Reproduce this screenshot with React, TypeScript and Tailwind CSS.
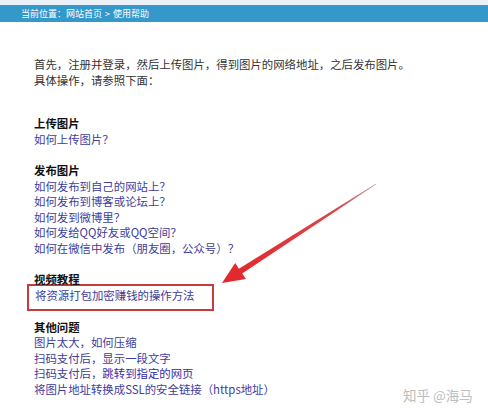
import React from "react";

const link = "text-[#3d3d9c]";

export default function App() {
  return (
    <div
      className="relative h-[413px] w-[488px] overflow-hidden bg-white text-[11.4px] leading-[15.5px] text-[#333]"
      style={{ fontFamily: '"Noto Sans CJK SC", "Noto Sans", sans-serif' }}
    >
      <div className="h-[5px] bg-[#eaf2f7]" />
      <div className="flex h-[17px] items-center bg-[#3598cb] pl-[21px] text-[9px] leading-[17px] text-white">
        <span>当前位置：网站首页</span>
        <span className="mx-[3px]">&gt;</span>
        <span>使用帮助</span>
      </div>

      <div className="pl-[34px] pt-[34px]">
        <p className="leading-[16px] text-[#333]">
          首先，注册并登录，然后上传图片，得到图片的网络地址，之后发布图片。
          <br />
          具体操作，请参照下面：
        </p>

        <div className="mt-[28px]">
          <div className="font-bold text-[#111]">上传图片</div>
          <div className={link}>如何上传图片？</div>
        </div>

        <div className="mt-[16px]">
          <div className="font-bold text-[#111]">发布图片</div>
          <div className={link}>如何发布到自己的网站上？</div>
          <div className={link}>如何发布到博客或论坛上？</div>
          <div className={link}>如何发到微博里？</div>
          <div className={link}>如何发给QQ好友或QQ空间？</div>
          <div className={link}>如何在微信中发布（朋友圈，公众号）？</div>
        </div>

        <div className="mt-[16px]">
          <div className="font-bold text-[#111]">视频教程</div>
          <div className="-ml-[7px] -mt-[4px] h-[27px] w-[187px] border-2 border-[#c73a3e] pl-[6px] pt-[2px]">
            <span className={link}>将资源打包加密赚钱的操作方法</span>
          </div>
        </div>

        <div className="mt-[9px]">
          <div className="font-bold text-[#111]">其他问题</div>
          <div className={link}>图片太大，如何压缩</div>
          <div className={link}>扫码支付后，显示一段文字</div>
          <div className={link}>
            扫码支付后，<span className="text-[#2f2fae]">跳转到指定的网页</span>
          </div>
          <div className={link}>将图片地址转换成SSL的安全链接（https地址）</div>
        </div>
      </div>

      <svg
        className="pointer-events-none absolute left-0 top-0"
        width="488"
        height="413"
        viewBox="0 0 488 413"
      >
        <defs>
          <linearGradient id="arr" x1="376" y1="184" x2="222" y2="283" gradientUnits="userSpaceOnUse">
            <stop offset="0" stopColor="#b9a3a6" />
            <stop offset="0.25" stopColor="#d9464b" />
            <stop offset="1" stopColor="#e3262b" />
          </linearGradient>
        </defs>
        <polygon
          points="222,283 246,279 242.2,273.4 376.3,184.3 375.7,183.7 238.9,268.8 235.2,263"
          fill="url(#arr)"
        />
      </svg>

      <div className="absolute bottom-[10px] left-[403px] text-[13.5px] leading-[16px] text-[#bdbdbd]">
        知乎 @海马
      </div>
    </div>
  );
}
